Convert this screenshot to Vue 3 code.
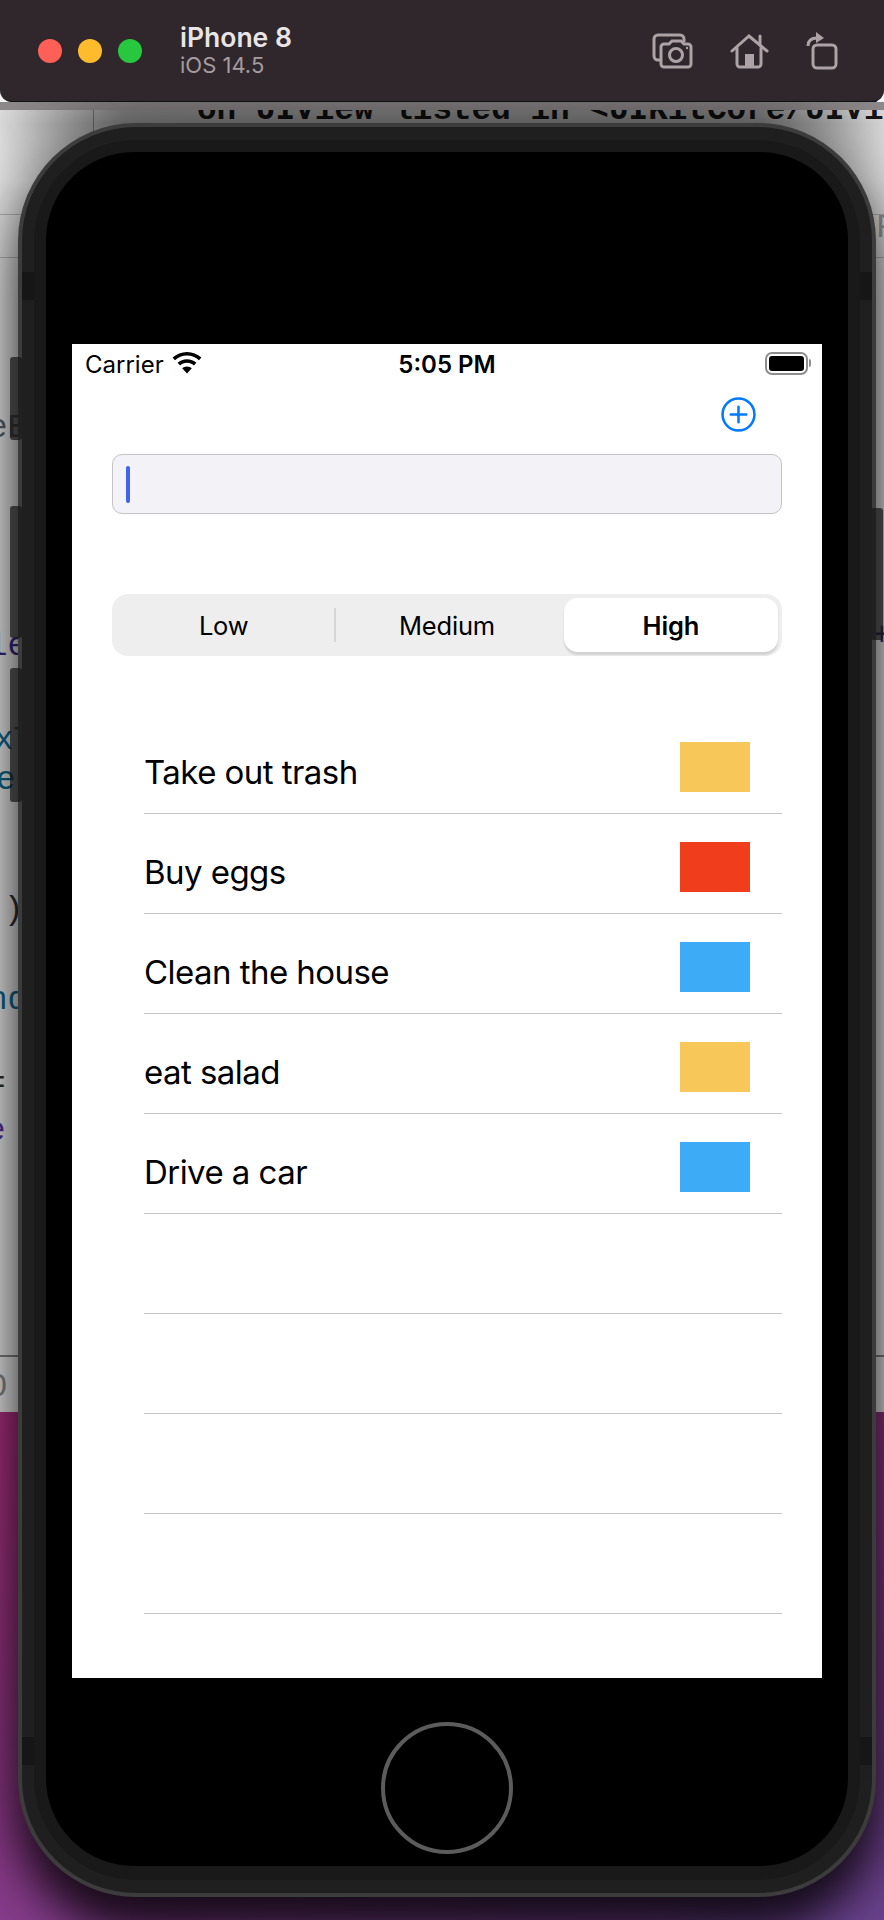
<template>
  <div class="desktop">
    <!-- window behind the simulator -->
    <div class="backdrop">
      <div class="grid-line h1"></div>
      <div class="grid-line h2"></div>
      <div class="grid-line h3"></div>
      <div class="grid-line v1"></div>
      <span
        v-for="frag in codeFragments"
        :key="frag.text + frag.top"
        class="code"
        :style="{ left: frag.left + 'px', top: frag.top + 'px', color: frag.color }"
      >{{ frag.text }}</span>
      <div class="top-shade"></div>
      <div class="bar-strip"></div>
    </div>

    <header class="titlebar">
      <div class="lights">
        <span class="light red"></span>
        <span class="light yellow"></span>
        <span class="light green"></span>
      </div>
      <div class="device">
        <div class="device-name">iPhone 8</div>
        <div class="device-os">iOS 14.5</div>
      </div>
      <div class="tools">
        <svg width="42" height="36" viewBox="0 0 42 36" fill="none" stroke="#ada3a6" stroke-width="3">
          <path d="M8 27H6a4 4 0 0 1-4-4V6a4 4 0 0 1 4-4h22a4 4 0 0 1 4 4v3" />
          <path d="M12 11h5l3-3h9l3 3h4a3 3 0 0 1 3 3v17a3 3 0 0 1-3 3H12a3 3 0 0 1-3-3V14a3 3 0 0 1 3-3z" />
          <circle cx="24" cy="22" r="6.5" />
          <circle cx="35" cy="15" r="1.2" fill="#ada3a6" stroke="none" />
        </svg>
        <svg width="40" height="36" viewBox="0 0 40 36" fill="none" stroke="#ada3a6" stroke-width="3" stroke-linecap="round">
          <path d="M2 18L19 3l18 15" />
          <path d="M30 3v9" />
          <path d="M7 15v16a3 3 0 0 0 3 3h18a3 3 0 0 0 3-3V15" />
          <rect x="15" y="21" width="9" height="13" fill="#ada3a6" stroke="none" />
        </svg>
        <svg width="32" height="38" viewBox="0 0 32 38" fill="none" stroke="#ada3a6" stroke-width="3">
          <rect x="7" y="13" width="23" height="23" rx="4" />
          <path d="M2 14c0-5 3-8 9-8" />
          <path d="M10 0l8 6-8 5z" fill="#ada3a6" stroke="none" />
        </svg>
      </div>
    </header>

    <div class="phone">
      <span class="side-btn left b1"></span>
      <span class="side-btn left b2"></span>
      <span class="side-btn left b3"></span>
      <span class="side-btn right b4"></span>
      <div class="bezel">
        <span class="notch n1"></span>
        <span class="notch n2"></span>
        <span class="notch n3"></span>
        <span class="notch n4"></span>
        <div class="bezel-inner">
          <div class="glass">
            <div class="screen">
              <div class="status-bar">
                <div class="status-left">
                  <span>Carrier</span>
                  <svg class="wifi" width="30" height="22" viewBox="0 0 30 22">
                    <path d="M15 0C9.500 0 4.500 2.100 0.600 5.600L3 8.200C6.200 5.300 10.400 3.500 15 3.500s8.800 1.800 12 4.700l2.400-2.600C25.500 2.100 20.500 0 15 0z" />
                    <path d="M15 7.200c-3.600 0-6.900 1.400-9.400 3.600l2.500 2.600c1.800-1.600 4.200-2.600 6.900-2.600s5.100 1 6.900 2.600l2.500-2.600c-2.500-2.200-5.800-3.600-9.400-3.600z" />
                    <path d="M15 14.400c-1.900 0-3.500 0.700-4.800 1.800L15 21.500l4.800-5.300c-1.300-1.100-2.900-1.800-4.800-1.800z" />
                  </svg>
                </div>
                <span class="status-time">5:05 PM</span>
                <div class="battery">
                  <div class="battery-shell"><div class="battery-level"></div></div>
                  <span class="battery-nub"></span>
                </div>
              </div>

              <div class="add-row">
                <svg width="35" height="35" viewBox="0 0 36 36" fill="none" stroke="#007aff" stroke-width="2.600">
                  <circle cx="18" cy="18" r="16.400" />
                  <path d="M18 10v16M10 18h16" stroke-linecap="round" />
                </svg>
              </div>

              <div class="text-field"><span class="caret"></span></div>

              <div class="segmented">
                <div
                  v-for="seg in segments"
                  :key="seg"
                  class="segment"
                  :class="{ active: seg === selected }"
                >{{ seg }}</div>
                <span class="seg-divider"></span>
              </div>

              <div class="list">
                <div v-for="(row, i) in rows" :key="i" class="row">
                  <span class="row-title">{{ row.title }}</span>
                  <span v-if="row.color" class="swatch" :style="{ background: row.color }"></span>
                </div>
              </div>
            </div>
            <div class="home-button"></div>
          </div>
        </div>
      </div>
    </div>
  </div>
</template>

<script setup>
const segments = ['Low', 'Medium', 'High']
const selected = 'High'

const rows = [
  { title: 'Take out trash', color: '#f7c75a' },
  { title: 'Buy eggs', color: '#f03e1c' },
  { title: 'Clean the house', color: '#3eabf6' },
  { title: 'eat salad', color: '#f7c75a' },
  { title: 'Drive a car', color: '#3eabf6' },
  { title: '' },
  { title: '' },
  { title: '' },
  { title: '' }
]

const codeFragments = [
  { text: 'on UIView listed in <UIKitCore/UIVi', left: 197, top: 92, color: '#1a1a1a' },
  { text: 'eB', left: -12, top: 410, color: '#5b6b78' },
  { text: 'le', left: -12, top: 628, color: '#3d2a8c' },
  { text: 'xT', left: -6, top: 722, color: '#0b6f95' },
  { text: 'eg', left: -4, top: 762, color: '#0b6f95' },
  { text: ')', left: 4, top: 892, color: '#333333' },
  { text: 'nd', left: -12, top: 982, color: '#0b6f95' },
  { text: '=', left: -14, top: 1066, color: '#333333' },
  { text: 'e', left: -14, top: 1113, color: '#5a35a8' },
  { text: '0', left: -12, top: 1369, color: '#8f8f8f' },
  { text: 'F', left: 876, top: 210, color: '#a8a8a8' },
  { text: '+', left: 872, top: 618, color: '#3d2a8c' }
]
</script>

<style scoped>
.desktop {
  position: relative;
  width: 884px;
  height: 1920px;
  overflow: hidden;
  font-family: Inter, "Liberation Sans", sans-serif;
  background:
    linear-gradient(160deg, #f02e92 0%, #dc2a84 45%, #6a4490 100%);
}

.backdrop {
  position: absolute;
  left: 0;
  top: 0;
  width: 884px;
  height: 1412px;
  background: #f8f8f8;
  overflow: hidden;
}

.top-shade {
  position: absolute;
  left: 0;
  top: 110px;
  width: 884px;
  height: 70px;
  background: linear-gradient(90deg, rgba(0, 0, 0, 0.1), rgba(0, 0, 0, 0.42) 14%, rgba(0, 0, 0, 0.42) 86%, rgba(0, 0, 0, 0.1));
  -webkit-mask-image: linear-gradient(#000 20%, transparent);
  mask-image: linear-gradient(#000 20%, transparent);
}

.bar-strip {
  position: absolute;
  left: 0;
  top: 102px;
  width: 884px;
  height: 8px;
  background: #8f8a8c;
}

.grid-line {
  position: absolute;
  background: #c4c4c4;
}
.grid-line.h1 { left: 0; right: 0; top: 214px; height: 1px; }
.grid-line.h2 { left: 0; right: 0; top: 257px; height: 1px; }
.grid-line.h3 { left: 0; right: 0; top: 1355px; height: 2px; background: #8a8a8a; }
.grid-line.v1 { left: 93px; top: 102px; width: 1px; height: 30px; background: #aaa; }

.code {
  position: absolute;
  font-family: "Liberation Mono", monospace;
  font-size: 32.7px;
  line-height: 38px;
  white-space: pre;
}

.code:first-of-type {
  font-weight: 700;
}

.titlebar {
  position: relative;
  z-index: 2;
  height: 102px;
  display: flex;
  align-items: center;
  background: #2f272b;
  border-radius: 0 0 12px 12px;
  border-bottom: 1px solid #111;
  box-sizing: border-box;
}

.lights {
  display: flex;
  gap: 16px;
  margin-left: 38px;
}

.light {
  width: 24px;
  height: 24px;
  border-radius: 50%;
}
.light.red { background: #fe5f57; }
.light.yellow { background: #febb2c; }
.light.green { background: #27c83f; }

.device {
  margin-left: 38px;
}

.device-name {
  color: #e9e5e7;
  font-size: 26.500px;
  line-height: 30px;
  font-weight: 600;
}

.device-os {
  color: #a49c9f;
  font-size: 22px;
  line-height: 27px;
}

.tools {
  display: flex;
  align-items: center;
  gap: 36px;
  margin-left: auto;
  margin-right: 46px;
}

.phone {
  position: relative;
  z-index: 1;
  width: 858px;
  height: 1774px;
  margin: 21px 0 0 18px;
  padding: 4px;
  box-sizing: border-box;
  background: #3c3c3c;
  border-radius: 118px;
  box-shadow:
    0 8px 70px 14px rgba(0, 0, 0, 0.6),
    0 40px 40px -10px rgba(0, 0, 0, 0.65);
}

.side-btn {
  position: absolute;
  width: 12px;
  background: rgba(24, 24, 24, 0.72);
  border-radius: 3px;
}
.side-btn.left { left: -8px; }
.side-btn.right { right: -7px; }
.side-btn.b1 { top: 234px; height: 83px; }
.side-btn.b2 { top: 383px; height: 132px; }
.side-btn.b3 { top: 545px; height: 134px; }
.side-btn.b4 { top: 385px; height: 132px; }

.bezel {
  position: relative;
  height: 100%;
  padding: 13px 12px;
  box-sizing: border-box;
  background: #1f1f1f;
  border-radius: 114px;
}

.notch {
  position: absolute;
  width: 12px;
  height: 28px;
  background: #161616;
}
.notch.n1 { left: 0; top: 145px; }
.notch.n2 { right: 0; top: 145px; }
.notch.n3 { left: 0; top: 1610px; }
.notch.n4 { right: 0; top: 1610px; }

.bezel-inner {
  position: relative;
  height: 100%;
  padding: 12px 12px 14px;
  box-sizing: border-box;
  background: #191919;
  border-radius: 102px;
}

.glass {
  height: 100%;
  padding-top: 192px;
  box-sizing: border-box;
  display: flex;
  flex-direction: column;
  align-items: center;
  background: #000;
  border-radius: 88px;
}

.screen {
  width: 750px;
  height: 1334px;
  flex-shrink: 0;
  background: #fff;
  color: #000;
  box-sizing: border-box;
}

.status-bar {
  position: relative;
  height: 40px;
  display: flex;
  align-items: center;
  justify-content: space-between;
  padding: 0 11px 0 13px;
  font-size: 24px;
}

.status-left {
  display: flex;
  align-items: center;
  gap: 8px;
}

.wifi {
  fill: #000;
  margin-top: -2px;
}

.status-time {
  position: absolute;
  left: 0;
  right: 0;
  text-align: center;
  font-weight: 600;
  font-size: 24px;
}

.battery {
  display: flex;
  align-items: center;
  gap: 1px;
  margin-top: -2px;
}

.battery-shell {
  width: 43px;
  height: 23px;
  padding: 2px;
  box-sizing: border-box;
  border: 2px solid #8e8e8e;
  border-radius: 7px;
}

.battery-level {
  height: 100%;
  background: #000;
  border-radius: 3px;
}

.battery-nub {
  width: 2px;
  height: 8px;
  background: #8e8e8e;
  border-radius: 0 2px 2px 0;
}

.add-row {
  display: flex;
  justify-content: flex-end;
  height: 70px;
  padding: 13px 66px 0 0;
  box-sizing: border-box;
}

.text-field {
  height: 60px;
  margin: 0 40px;
  display: flex;
  align-items: center;
  padding-left: 13px;
  box-sizing: border-box;
  background: #f2f2f7;
  border: 1px solid #c3c3c6;
  border-radius: 10px;
}

.caret {
  width: 4px;
  height: 37px;
  background: #4263eb;
  border-radius: 2px;
}

.segmented {
  position: relative;
  display: grid;
  grid-template-columns: repeat(3, minmax(0, 1fr));
  height: 62px;
  margin: 80px 40px 0;
  box-sizing: border-box;
  background: #eeeeef;
  border-radius: 16px;
}

.segment {
  display: flex;
  align-items: center;
  justify-content: center;
  font-size: 25.500px;
  letter-spacing: -0.2px;
}

.segment.active {
  margin: 4px 4px 4px 5px;
  background: #fff;
  border-radius: 14px;
  font-weight: 600;
  box-shadow: 0 3px 2px rgba(0, 0, 0, 0.12);
}

.seg-divider {
  position: absolute;
  left: 222px;
  top: 14px;
  width: 2px;
  height: 34px;
  background: #d6d6d8;
}

.list {
  margin: 58px 40px 0 72px;
}

.row {
  display: flex;
  justify-content: space-between;
  height: 100px;
  padding-right: 32px;
  box-sizing: border-box;
  border-bottom: 1px solid #c6c6c8;
}

.row-title {
  padding-top: 38px;
  font-size: 33px;
  line-height: 40px;
  letter-spacing: -0.55px;
}

.swatch {
  width: 70px;
  height: 50px;
  margin-top: 28px;
}

.home-button {
  width: 132px;
  height: 132px;
  margin-top: 44px;
  flex-shrink: 0;
  box-sizing: border-box;
  border: 4px solid #5c5c5c;
  border-radius: 50%;
}
</style>

<style>
html,
body {
  margin: 0;
  background: #000;
}
</style>
